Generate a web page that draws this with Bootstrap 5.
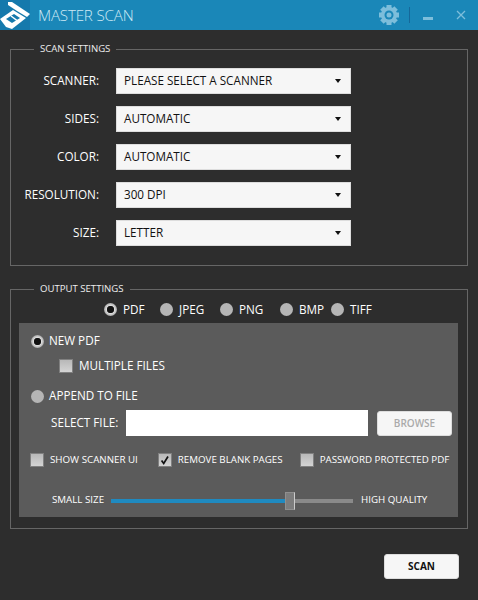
<!DOCTYPE html>
<html>
<head>
    <title>Master Scan</title>
    <link href="https://cdn.jsdelivr.net/npm/bootstrap@5.3.0/dist/css/bootstrap.min.css" rel="stylesheet">
    <style>
        body {
            background: #2d2d2d;
            color: #fff;
            font-family: "Open Sans", "Liberation Sans", sans-serif;
            font-size: 11.7px;
            width: 478px;
            height: 600px;
            overflow: hidden;
        }
        .title-bar { height: 30px; background: #1a87b8; }
        .logo-box { width: 30px; height: 30px; background: #1579ac; overflow: hidden; }
        .app-title { font-size: 15.2px; font-weight: 300; color: #cfeaf5; margin-left: 8px; letter-spacing: -0.2px; }
        .win-divider { width: 1px; height: 16px; background: #15689a; margin: 0 13px 0 9px; }
        .win-min { margin-top: 6px; }
        .win-close { margin: 0 12px 0 23px; }
        .group-box {
            border: 1px solid #666;
            margin: 0;
            padding: 0;
            min-width: 0;
        }
        .group-box legend {
            float: none;
            width: auto;
            font-size: 9.6px;
            line-height: 14px;
            margin: 0 0 0 23px;
            padding: 0 6px;
            color: #eee;
        }
        .scan-group { margin: 12px 10px 0; height: 224px; }
        .output-group { margin: 16px 10px 0; height: 247px; }
        .scan-fields { padding-top: 12px; }
        .field-row { height: 26px; margin-bottom: 12px; }
        .field-label { width: 88px; text-align: right; margin-right: 17px; }
        .scan-select {
            width: 235px;
            height: 26px;
            padding: 0 9px 0 7px;
            background: #f6f6f6;
            border: 1px solid #ddd;
            border-radius: 0;
            color: #111;
            font-size: 11.7px;
        }
        .scan-select:hover, .scan-select:focus { background: #f6f6f6; border-color: #ddd; color: #111; }
        .scan-select::after { margin-right: 0; border-top-width: 4px; border-left-width: 3.5px; border-right-width: 3.5px; }
        .format-row { height: 27px; padding-left: 93px; }
        .option-input.form-check-input {
            width: 13px;
            height: 13px;
            margin: 0;
            float: none;
            flex: none;
            background: #b5b5b5;
            border: none;
            box-shadow: none;
        }
        .option-input.form-check-input[type=radio]:checked {
            background: radial-gradient(circle, #111 0 3px, #333 3.5px, #ddd 4px, #a9a9a9 6.5px);
        }
        .option-input.square.form-check-input {
            width: 14px;
            height: 14px;
            border: 1px solid #808080;
            border-radius: 0;
            background: linear-gradient(#b8b8b8, #d4d4d4);
        }
        .option-input.square.form-check-input:checked {
            background: url("data:image/svg+xml,%3Csvg xmlns='http://www.w3.org/2000/svg' viewBox='0 0 14 14'%3E%3Cpath d='M3 7.5 5.5 11 10.5 3' fill='none' stroke='%23111' stroke-width='2'/%3E%3C/svg%3E"), linear-gradient(#b8b8b8, #d4d4d4);
        }
        .format-item { width: 56px; gap: 6px; }
        .format-item:nth-child(2), .format-item:nth-child(3) { width: 60px; }
        .format-item:nth-child(4) { width: 51px; }
        .inner-panel { margin: 0 9px 0 8px; height: 194px; background: #5b5b5b; padding: 11px 0 0 12px; }
        .panel-line { height: 14px; gap: 5px; }
        .sub-line { margin: 10px 0 0 28px; gap: 6px; height: 16px; }
        .append-line { margin-top: 15px; }
        .file-row { margin-top: 7px; height: 26px; padding-left: 20px; }
        .file-label { width: 75px; }
        .file-input { width: 242px; height: 26px; flex: none; border: none; border-radius: 0; background: #fff; padding: 0 6px; }
        .browse-btn {
            width: 75px;
            height: 25px;
            flex: none;
            margin-left: 9px;
            padding: 0;
            background: #f6f6f6;
            border: 1px solid #ddd;
            border-radius: 3px;
            color: #aaa;
            font-size: 10px;
            font-weight: 600;
        }
        .browse-btn:disabled { background: #f6f6f6; border-color: #ddd; color: #aaa; opacity: 1; }
        .checks-row { margin: 16px 0 0 -1px; height: 16px; font-size: 9.75px; }
        .check-item { gap: 6px; }
        .check-item:nth-child(1) { margin-right: 20px; }
        .check-item:nth-child(2) { margin-right: 17px; }
        .slider-row { margin-top: 22px; height: 20px; padding-left: 21px; font-size: 9.75px; }
        .quality-range {
            width: 242px;
            height: 18px;
            margin: 2px 8px 0 7px;
        }
        .quality-range::-webkit-slider-runnable-track {
            height: 4px;
            background: linear-gradient(90deg, #1f8ac0 75%, #8a8a8a 75%);
            border-radius: 0;
        }
        .quality-range::-webkit-slider-thumb {
            width: 10px;
            height: 18px;
            margin-top: -7px;
            background: #7d7d7d;
            border-radius: 0;
            border: 1px solid #8f8f8f;
            border-right-color: #ccc;
        }
        .footer-row { padding: 25px 19px 0 0; }
        .scan-btn {
            width: 75px;
            height: 25px;
            padding: 0;
            background: #f6f6f6;
            border: 1px solid #ddd;
            border-radius: 3px;
            color: #111;
            font-size: 10px;
            font-weight: 700;
        }
    </style>
</head>
<body>
    <div class="title-bar d-flex align-items-center">
        <div class="logo-box flex-shrink-0">
            <svg width="30" height="30" viewBox="0 0 30 30">
                <path d="M8 2 12 2 30 14 27 17 17 11 8 5Z" fill="#fff"/>
                <path d="M0 19 13 10 26 18 12 29 6 27Z" fill="#fff"/>
                <path d="M6 19 14 14 20 18 12 23Z" fill="#1579ac"/>
                <path d="M11 16 17 20.5" stroke="#fff" stroke-width="1.5"/>
            </svg>
        </div>
        <div class="app-title flex-grow-1">MASTER SCAN</div>
        <svg width="22" height="22" viewBox="0 0 22 22">
            <g fill="#7dbedb">
                <circle cx="11" cy="11" r="8"/>
                <rect x="8.5" y="1" width="5" height="20"/>
                <rect x="8.5" y="1" width="5" height="20" transform="rotate(45 11 11)"/>
                <rect x="8.5" y="1" width="5" height="20" transform="rotate(90 11 11)"/>
                <rect x="8.5" y="1" width="5" height="20" transform="rotate(135 11 11)"/>
            </g>
            <circle cx="11" cy="11" r="4.5" fill="#1a87b8"/>
            <circle cx="11" cy="11" r="2.5" fill="#7dbedb"/>
        </svg>
        <div class="win-divider"></div>
        <svg class="win-min" width="10" height="3" viewBox="0 0 10 3"><rect width="10" height="3" fill="#7dbedb"/></svg>
        <svg class="win-close" width="10" height="10" viewBox="0 0 10 10"><path d="M1 1 9 9M9 1 1 9" stroke="#7dbedb" stroke-width="1.3"/></svg>
    </div>

    <fieldset class="group-box scan-group">
        <legend>SCAN SETTINGS</legend>
        <div id="scanFields" class="scan-fields"></div>
    </fieldset>

    <fieldset class="group-box output-group">
        <legend>OUTPUT SETTINGS</legend>
        <div id="formatRow" class="format-row d-flex align-items-center"></div>
        <div class="inner-panel">
            <div class="panel-line d-flex align-items-center">
                <input class="form-check-input option-input" type="radio" name="mode" checked>
                <span>NEW PDF</span>
            </div>
            <div class="sub-line d-flex align-items-center">
                <input class="form-check-input option-input square" type="checkbox">
                <span>MULTIPLE FILES</span>
            </div>
            <div class="panel-line append-line d-flex align-items-center">
                <input class="form-check-input option-input" type="radio" name="mode">
                <span>APPEND TO FILE</span>
            </div>
            <div class="file-row d-flex align-items-center">
                <span class="file-label">SELECT FILE:</span>
                <input class="form-control file-input" type="text">
                <button class="btn browse-btn" disabled>BROWSE</button>
            </div>
            <div class="checks-row d-flex align-items-center">
                <div class="check-item d-flex align-items-center">
                    <input class="form-check-input option-input square" type="checkbox">
                    <span>SHOW SCANNER UI</span>
                </div>
                <div class="check-item d-flex align-items-center">
                    <input class="form-check-input option-input square" type="checkbox" checked>
                    <span>REMOVE BLANK PAGES</span>
                </div>
                <div class="check-item d-flex align-items-center">
                    <input class="form-check-input option-input square" type="checkbox">
                    <span>PASSWORD PROTECTED PDF</span>
                </div>
            </div>
            <div class="slider-row d-flex align-items-center">
                <span>SMALL SIZE</span>
                <input class="form-range quality-range" type="range" value="75">
                <span>HIGH QUALITY</span>
            </div>
        </div>
    </fieldset>

    <div class="footer-row d-flex justify-content-end">
        <button class="btn scan-btn">SCAN</button>
    </div>

    <script src="https://cdn.jsdelivr.net/npm/bootstrap@5.3.0/dist/js/bootstrap.bundle.min.js"></script>
    <script>
        const scanFields = [
            { label: "SCANNER:", value: "PLEASE SELECT A SCANNER" },
            { label: "SIDES:", value: "AUTOMATIC" },
            { label: "COLOR:", value: "AUTOMATIC" },
            { label: "RESOLUTION:", value: "300 DPI" },
            { label: "SIZE:", value: "LETTER" }
        ];
        const formats = ["PDF", "JPEG", "PNG", "BMP", "TIFF"];

        document.getElementById('scanFields').innerHTML = scanFields.map(f => `
            <div class="field-row d-flex align-items-center">
                <div class="field-label">${f.label}</div>
                <div class="dropdown">
                    <button class="btn scan-select dropdown-toggle d-flex align-items-center justify-content-between" data-bs-toggle="dropdown">${f.value}</button>
                </div>
            </div>`).join('');

        document.getElementById('formatRow').innerHTML = formats.map((f, i) => `
            <label class="format-item d-flex align-items-center">
                <input class="form-check-input option-input" type="radio" name="format" ${i === 0 ? 'checked' : ''}>
                <span>${f}</span>
            </label>`).join('');
    </script>
</body>
</html>
